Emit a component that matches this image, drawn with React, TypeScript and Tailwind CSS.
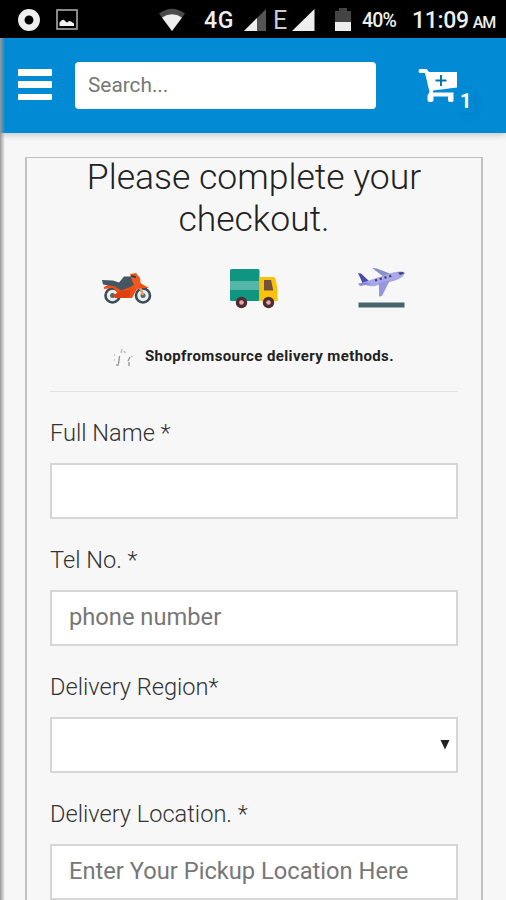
import { useState } from 'react'

const inputClass =
  'block w-full h-14 border-2 border-[#d6d6d6] bg-white px-[17px] pb-[2px] text-[23.7px] leading-[50px] text-[#444] placeholder:text-[#777] outline-none'
const labelClass = 'block h-[71px] pt-[25px] text-[23.6px] leading-8 font-light text-[#333] whitespace-nowrap'

function StatusBar() {
  return (
    <div className="flex h-[38px] items-center bg-black text-[#eee]">
      <svg className="ml-[17px] mt-[1px]" width="24" height="24" viewBox="0 0 24 24">
        <circle cx="12" cy="12" r="7.7" fill="none" stroke="#eee" strokeWidth="6.5" />
      </svg>
      <svg className="ml-[15px] mt-[2px]" width="22" height="22" viewBox="0 0 22 22">
        <rect x="1" y="1" width="20" height="19" fill="none" stroke="#aaa" strokeWidth="1.6" />
        <path d="M3.500 17v-3.500l2.500-2.500q2-1 3 1l2 1.500q2-2.500 4-1l3 2v2.500z" fill="#f2f2f2" />
      </svg>
      <svg className="ml-[80px] mt-[1px]" width="28" height="24" viewBox="0 0 28 24">
        <path d="M1 5.500Q14-4 27 5.500L14 23z" fill="#4a4a4a" />
        <path d="M4 9.500Q14 3 24 9.500L14 23z" fill="#eee" />
      </svg>
      <span className="ml-[18px] w-[32px] text-[23px] leading-6 font-medium tracking-[0.6px] mt-[3px]">4G</span>
      <svg className="ml-[7px] mt-[1px]" width="24" height="24" viewBox="0 0 24 24">
        <path d="M23 1v22H1z" fill="#555" />
        <path d="M14 10v13H1z" fill="#eee" />
      </svg>
      <span className="ml-[6px] w-[14px] text-[25px] leading-6 mt-[3px] text-[#ccc]">E</span>
      <svg className="ml-[4px] mt-[1px]" width="24" height="24" viewBox="0 0 24 24">
        <path d="M23.500 1v22H1z" fill="#eee" />
      </svg>
      <svg className="ml-[20px] mt-[-1px]" width="16" height="24" viewBox="0 0 16 24">
        <path d="M0 4h4V1h8v3h4v11H0z" fill="#444" />
        <path d="M0 15h16v9H0z" fill="#eee" />
      </svg>
      <span className="ml-[11px] w-[35px] text-[19.5px] leading-6 font-medium tracking-[-0.8px] mt-[3px]">40%</span>
      <span className="ml-[15px] text-[23px] leading-6 font-medium tracking-[-0.3px] mt-[3px]">11:09</span>
      <span className="ml-[4px] text-[16px] leading-6 font-medium tracking-[-1.2px] mt-[7px]">AM</span>
    </div>
  )
}

function Header() {
  return (
    <header className="flex h-[95px] bg-[#028ad5] shadow-[0_1px_7px_rgba(0,0,0,0.25)]">
      <button className="ml-[18px] mt-[31px] flex h-[31px] w-[34px] flex-col justify-between" aria-label="Menu">
        <span className="h-[6.500px] w-full rounded-[1px] bg-white" />
        <span className="h-[6.500px] w-full rounded-[1px] bg-white" />
        <span className="h-[6.500px] w-full rounded-[1px] bg-white" />
      </button>
      <input
        type="text"
        placeholder="Search..."
        className="ml-[23px] mt-[24px] h-[47px] w-[301px] rounded-[4px] bg-white px-[13px] pb-[2px] text-[20.8px] text-[#555] placeholder:text-[#777] outline-none"
      />
      <svg className="ml-[42px] mt-[31px]" width="40" height="34" viewBox="0 0 40 34">
        <path d="M1.500 0H8.500L11 3H39V18.500L15 21.500V23.500H35.500V31.500Q35.500 33 33.500 33H32Q30 33 30 31V27.500H15.500V31Q15.500 33 13.500 33H11.500Q9.500 33 9.500 31V26.500L11.500 23L7 4H1.500Q-.500 2 1.500 0Z" fill="#fff" />
        <path d="M23 6v11M17.500 11.500h11" stroke="#026fb0" strokeWidth="1.900" />
      </svg>
      <span className="ml-[2px] mt-[51px] h-[24px] w-[14px] rounded-sm text-[20px] leading-6 font-bold text-white shadow-[3px_3px_6px_rgba(0,60,110,0.1)]">
        1
      </span>
    </header>
  )
}

function Motorbike() {
  return (
    <svg width="50" height="32" viewBox="0 0 50 32">
      <g fill="#e9eef0" stroke="#3d4b55" strokeWidth="2.600">
        <circle cx="10.500" cy="22.500" r="7" />
        <circle cx="41" cy="22.500" r="7" />
      </g>
      <g fill="#59656c">
        <circle cx="10.500" cy="22.500" r="2.500" />
        <circle cx="41" cy="22.500" r="2.500" />
      </g>
      <path d="M33 2L41 22" stroke="#e9a06a" strokeWidth="2.500" />
      <path d="M2 14L8 11l10 3 13-6 7 2 9 5-7 0-5 1-5 9H14l1-6-4-4-9 1z" fill="#f04e18" />
      <path d="M11 22l10-5 8 1-2 7H13z" fill="#dd4113" />
      <path d="M0 7l11 .500 6 2 5-6h8l4 7-7 4-8 3-6-4-12-2z" fill="#455661" />
      <path d="M28 1l6-1 4 5 1 7-5 4-4-8z" fill="#f05a20" />
      <path d="M29 3l5 1" stroke="#34434d" strokeWidth="2" />
    </svg>
  )
}

function Truck() {
  return (
    <svg width="48" height="40" viewBox="0 0 48 40">
      <rect x="0" y="0" width="29.500" height="32" rx="1.500" fill="#109581" />
      <rect x="0" y="12" width="29.500" height="9" fill="#55b5a7" />
      <path d="M29.500 8H43q2 0 2.500 2L47.500 20v12h-18z" fill="#fac20b" />
      <path d="M34 11h7l2 9v1.500h-9z" fill="#73513b" />
      <g fill="#4f2c30">
        <circle cx="11.500" cy="33.500" r="5.700" />
        <circle cx="38.500" cy="33.500" r="5.700" />
      </g>
      <g fill="#e3a9a9">
        <circle cx="11.500" cy="33.500" r="2.300" />
        <circle cx="38.500" cy="33.500" r="2.300" />
      </g>
    </svg>
  )
}

function Plane() {
  return (
    <svg width="48" height="41" viewBox="0 0 48 41">
      <path d="M14 1l5 .500L33 7l-7 3z" fill="#8790c4" />
      <path d="M0 6l3 .500L11 14l-2 3H5z" fill="#4d49ac" />
      <path d="M5 15.500L35 5.500q10-2 12 0-1 5-10 8L17 19q-8 1-12-3z" fill="#aaa7e8" />
      <path d="M21 16l11-3-8 16-3 .500z" fill="#9895df" />
      <path d="M0 16.500l9-1 4 1.500-11 2z" fill="#8b88d2" />
      <path d="M40 5.500l5-.500 1 1.500-4 1.500z" fill="#3e426d" />
      <path d="M17 13.500L34 8.500" stroke="#3d4180" strokeWidth="2.300" strokeDasharray="2.200 2.700" />
      <rect x="0.500" y="35.500" width="46" height="5" fill="#47656d" />
    </svg>
  )
}

function Sparkle() {
  return (
    <svg width="22" height="20" viewBox="0 0 22 20" fill="none" strokeWidth="1.400">
      <path d="M7.500 9l-1 8M4 18h3M18 10l-2 4M17 15v4" stroke="#999" />
      <path d="M10 2l-1 4M12 4l1.500 2M2 8h1M2 13h1M19 9l1.500 1" stroke="#bcbcbc" />
    </svg>
  )
}

export default function App() {
  const [region, setRegion] = useState('')

  return (
    <div className="relative h-[900px] w-[506px] overflow-hidden bg-[#f7f7f7] font-['Roboto','Liberation_Sans',sans-serif]">
      <StatusBar />
      <Header />
      <main className="ml-[25px] mt-[24px] mr-[23px] h-[760px] border-2 border-t-[1.500px] border-[#c2c2c2] px-[23px]">
        <h1 className="mt-[-2px] text-center text-[35.5px] leading-[42px] font-light text-[#222]">
          Please complete your
          <br />
          checkout.
        </h1>
        <div className="mt-[27px] flex h-[44px] pl-[52px]">
          <div className="w-[128px] pt-[6px]"><Motorbike /></div>
          <div className="w-[128px] pt-[2px]"><Truck /></div>
          <Plane />
        </div>
        <div className="mt-[36px] flex h-[24px] pl-[62px]">
          <Sparkle />
          <span className="ml-[11px] mt-[-3px] text-[15px] leading-6 font-bold tracking-[0.38px] text-[#222] whitespace-nowrap">
            Shopfromsource delivery methods.
          </span>
        </div>
        <hr className="mt-[20px] h-[1px] border-0 bg-[#e2e2e2]" />

        <form onSubmit={(e) => e.preventDefault()}>
          <label htmlFor="name" className={labelClass}>Full Name *</label>
          <input id="name" type="text" className={inputClass} />
          <label htmlFor="tel" className={labelClass}>Tel No. *</label>
          <input id="tel" type="tel" placeholder="phone number" className={inputClass} />
          <label htmlFor="region" className={labelClass}>Delivery Region*</label>
          <div className="relative">
            <select
              id="region"
              value={region}
              onChange={(e) => setRegion(e.target.value)}
              className={`${inputClass} appearance-none`}
            >
              <option value=""></option>
            </select>
            <svg className="pointer-events-none absolute right-[8px] top-[23px]" width="10" height="10" viewBox="0 0 10 10">
              <path d="M.500 0h9L5 9.500z" fill="#222" />
            </svg>
          </div>
          <label htmlFor="location" className={labelClass}>Delivery Location. *</label>
          <input id="location" type="text" placeholder="Enter Your Pickup Location Here" className={inputClass} />
        </form>
      </main>
      {/* edge of the drawer lying over the page */}
      <div className="pointer-events-none absolute left-0 top-[38px] h-[862px] w-[5px] bg-linear-to-r from-[#999] to-transparent" />
    </div>
  )
}
